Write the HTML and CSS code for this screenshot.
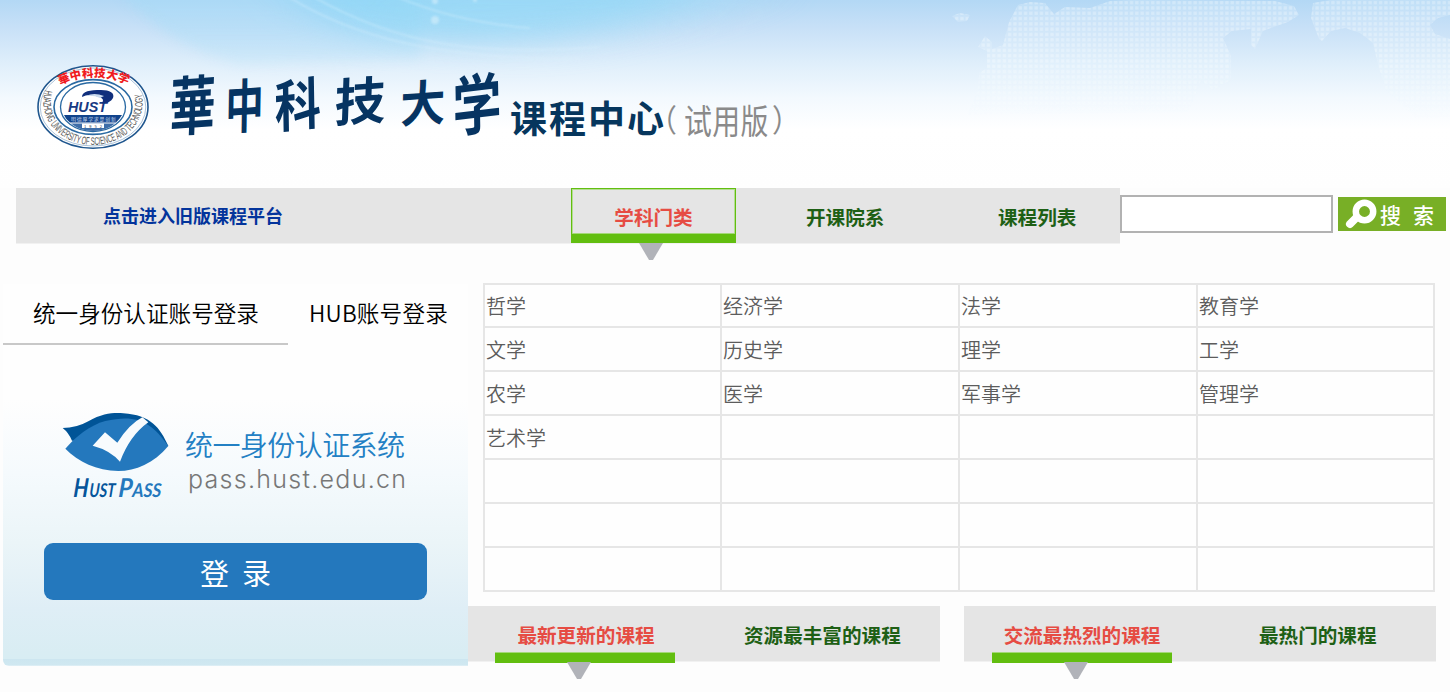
FILE: index.html
```html
<!DOCTYPE html>
<html lang="zh-CN">
<head>
<meta charset="utf-8">
<title>华中科技大学课程中心</title>
<link rel="stylesheet" href="styles.css">
</head>
<body>
<header class="banner">
  <svg class="banner-art" viewBox="0 0 1450 188" width="1450" height="188" aria-label="華中科技大学 课程中心">
    <defs>
      <linearGradient id="fade" x1="0" y1="0" x2="0" y2="1"><stop offset="0" stop-color="#fff"/><stop offset=".2" stop-color="#eee"/><stop offset=".5" stop-color="#777"/><stop offset="1" stop-color="#000"/></linearGradient>
      <linearGradient id="mapFade" x1="0" y1="0" x2="0" y2="1"><stop offset="0" stop-color="#fff"/><stop offset=".5" stop-color="#fff"/><stop offset="1" stop-color="#000"/></linearGradient>
      <mask id="fadeMask" maskUnits="userSpaceOnUse" x="0" y="0" width="1450" height="130"><rect width="1450" height="130" fill="url(#fade)"/></mask>
      <mask id="mapMask" maskUnits="userSpaceOnUse" x="0" y="0" width="1450" height="130"><rect width="1450" height="130" fill="url(#mapFade)"/></mask>
      <filter id="soft" x="-20%" y="-50%" width="140%" height="200%"><feGaussianBlur stdDeviation="6"/></filter>
      <filter id="wide" x="-20%" y="-80%" width="140%" height="260%"><feGaussianBlur stdDeviation="26 14"/></filter>
      <filter id="soft1"><feGaussianBlur stdDeviation="1"/></filter>
      <filter id="soft2"><feGaussianBlur stdDeviation=".7"/></filter>
      <pattern id="dots" width="5.3" height="5.3" patternUnits="userSpaceOnUse"><rect width="5.3" height="5.3" fill="#e8f5ff" opacity=".24"/><rect x="1" y="1" width="3.3" height="3.3" fill="#fff" opacity=".26"/></pattern>
      <path id="ring" d="M45 90 C36 125 67 145 93 145 C120 145 150 125 141 90"/>
      <path id="arc" d="M60 85 Q93 69 129 85"/>
    </defs>
    <g mask="url(#fadeMask)">
      <path d="M116 -20 L126 0 C165 38 200 55 240 66 L420 60 L420 -20Z" fill="#a2dcf7" opacity=".42" filter="url(#soft)"/>
      <path d="M270 -30 C310 20 350 40 430 44 C520 44 600 30 680 0 L700 -30Z" fill="#85d5f6" opacity=".62" filter="url(#wide)"/>
      <path d="M380 20 C480 75 600 55 760 0 L780 -20 L450 -20Z" fill="#a0dcf7" opacity=".38" filter="url(#wide)"/>
      <g fill="none" stroke="#e5f7ff" stroke-width="1.500" opacity=".38" filter="url(#soft1)"><path d="M285 -5 Q350 35 430 48 T580 58"/><path d="M310 -5 Q375 32 440 43 T600 47"/><path d="M395 -4 Q455 22 530 28"/></g>
      <g fill="#fff" opacity=".35" filter="url(#soft1)"><circle cx="435" cy="20" r="4"/><circle cx="435" cy="1" r="3"/><circle cx="475" cy="0" r="2"/></g>
    </g>
    <g mask="url(#mapMask)" filter="url(#soft2)">
      <path fill="url(#dots)" d="M1003 45 1009 22 1018 5 1030 2 1045 3 1054 14 1065 7 1090 8 1110 1 1130 0 1275 1 1294 6 1299 15 1288 22 1271 28 1263 31 1255 49 1251 45 1251 29 1232 31 1223 38 1231 56 1231 80 1213 90 1201 80 1193 101 1188 112 967 115 978 91 979 73 987 68 987 51 978 47 985 36 992 42 992 49Z M1311 18 1313 3 1330 0 1450 0 1450 15 1438 18 1430 25 1435 34 1450 39 1450 117 1416 118 1400 103 1386 90 1378 65 1373 43 1360 33 1345 28 1331 31 1322 41 1319 39 1316 31Z M952 16 960 13 970 15 967 21 958 22Z"/>
    </g>
    <g class="seal">
      <ellipse cx="93" cy="107" rx="55" ry="41.3" fill="#fff" stroke="#1f568e" stroke-width="1.6"/>
      <ellipse cx="93" cy="107" rx="52.8" ry="39" fill="none" stroke="#87a9c8" stroke-width=".7"/>
      <ellipse cx="93" cy="107" rx="39" ry="27.400" fill="#fff" stroke="#2969a2" stroke-width="1.6"/>
      <ellipse cx="93" cy="107" rx="32.500" ry="24.500" fill="#fff" stroke="#2969a2" stroke-width="1.3"/>
      <text class="seal-cn"><textPath href="#arc" textLength="70" lengthAdjust="spacing">華中科技大学</textPath></text>
      <text class="seal-en"><textPath href="#ring" textLength="166" lengthAdjust="spacingAndGlyphs">HUAZHONG UNIVERSITY OF SCIENCE AND TECHNOLOGY</textPath></text>
      <path d="M64 115H122Q119 120 116 122.500H70Q66 120 64 115Z" fill="#10438b"/>
      <path d="M71 123.500H115Q106 131 93 131 80 131 71 123.500Z" fill="#3e6da8"/>
      <text class="seal-motto" x="71" y="121" textLength="45">明德厚学求是创新</text>
      <rect x="82" y="123.500" width="22" height="4.500" fill="#fff"/><text class="seal-year" x="84" y="127.500" textLength="18">1952</text>
      <text class="seal-word" x="68" y="112" textLength="39" lengthAdjust="spacingAndGlyphs">HUST</text>
      <path d="M82 97C82 91 90 90 101 90 110 90 115 93 113 98 111 102 106 104 102 103 105 99 101 97 96 96 90 94 86 95 82 97Z" fill="#102f7d"/>
      <path d="M86 96Q94 92 104 96L100 98Q94 95 86 96Z" fill="#c8d9ee"/>
    </g>
    <g class="brush">
      <text transform="translate(169 131) rotate(-4) skewX(-6) scale(.79 1.1)" font-size="58">華</text>
      <text transform="translate(225 129) rotate(-4) skewX(-5) scale(.71 1.07)" font-size="54">中</text>
      <text transform="translate(275 128) rotate(-6) skewX(-5) scale(.83 1)" font-size="56">科</text>
      <text transform="translate(334 122) rotate(-4) skewX(-6) scale(1 1)" font-size="51">技</text>
      <text transform="translate(400 123) rotate(-4) skewX(-5) scale(.92 1)" font-size="49">大</text>
      <text transform="translate(453 132) rotate(-7) skewX(-6) scale(.82 1.09)" font-size="60">学</text>
    </g>
    <text class="site-name" x="510" y="133" textLength="154">课程中心</text>
    <text class="trial" transform="translate(649 132) scale(.82 .92)" x="0" y="0">（</text>
    <text class="trial" transform="translate(684 134) scale(.82 1)" x="0" y="0" textLength="103">试用版</text>
    <text class="trial" transform="translate(772 132) scale(.82 .92)" x="0" y="0">）</text>
  </svg>
</header>

<nav class="nav">
  <div class="bar">
    <a class="old">点击进入旧版课程平台</a>
    <a class="tab active boxed">学科门类<svg class="arrow" width="24" height="17"><path d="M0 0H24L14 17H10Z"/></svg></a>
    <a class="tab departments">开课院系</a>
    <a class="tab courses">课程列表</a>
  </div>
  <input class="query" type="text" aria-label="搜索">
  <button class="search"><svg width="32" height="30" viewBox="0 0 32 30"><circle cx="19.500" cy="12.500" r="8.700" fill="none" stroke="#fff" stroke-width="6.500"/><path d="M11 19 5 25" stroke="#fff" stroke-width="8" stroke-linecap="round"/></svg><span>搜</span><span>索</span></button>
</nav>

<main class="main">
  <section class="login">
    <div class="login-tabs"><a class="current">统一身份认证账号登录</a><a class="hub">HUB账号登录</a></div>
    <svg class="pass" width="400" height="110" viewBox="40 400 400 110">
      <g transform="translate(40 400) scale(.3333)">
        <path fill="#005497" d="M68 84Q110 84 145 64C190 38 225 38 250 40 332 45 361 84 385 138L96 122Q86 98 68 84Z"/>
        <path fill="#2478bd" d="M76 146C105 112 150 75 196 63 287 42 332 62 385 138 342 190 286 213 235 213 170 212 115 185 76 146Z"/>
        <path fill="#f8fbfd" d="M158 137 195 97 232 128Q268 72 307 52L325 67Q270 106 240 185 211 151 158 137Z"/>
      </g>
      <text class="hust" transform="translate(73 497) skewX(-4)"><tspan font-size="26" textLength="15" lengthAdjust="spacingAndGlyphs">H</tspan><tspan font-size="19" x="16" textLength="26" lengthAdjust="spacingAndGlyphs">UST</tspan></text>
      <text class="hust light" transform="translate(118 497) skewX(-4)"><tspan font-size="26" textLength="14" lengthAdjust="spacingAndGlyphs">P</tspan><tspan font-size="19" x="14" textLength="29" lengthAdjust="spacingAndGlyphs">ASS</tspan></text>
      <text class="pass-cn" x="185" y="456" textLength="220">统一身份认证系统</text>
      <text class="pass-url" x="188" y="488" textLength="218">pass.hust.edu.cn</text>
    </svg>
    <button class="submit">登&nbsp; 录</button>
  </section>

  <section class="content">
    <div class="subjects">
      <div>哲学</div><div>经济学</div><div>法学</div><div>教育学</div>
      <div>文学</div><div>历史学</div><div>理学</div><div>工学</div>
      <div>农学</div><div>医学</div><div>军事学</div><div>管理学</div>
      <div>艺术学</div><div></div><div></div><div></div>
      <div></div><div></div><div></div><div></div>
      <div></div><div></div><div></div><div></div>
      <div></div><div></div><div></div><div></div>
    </div>
    <div class="rankings">
      <div class="rank latest"><a class="tab active">最新更新的课程<svg class="arrow" width="24" height="18"><path d="M0 0H24L14 17H10Z"/></svg></a><a class="tab second">资源最丰富的课程</a></div>
      <div class="rank popular"><a class="tab active">交流最热烈的课程<svg class="arrow" width="24" height="18"><path d="M0 0H24L14 17H10Z"/></svg></a><a class="tab second">最热门的课程</a></div>
    </div>
  </section>
</main>
</body>
</html>
```

FILE: styles.css
```css
* { box-sizing: border-box; }
body { margin: 0; width: 1450px; height: 692px; overflow: hidden; background: #fdfdfd; font-family: "Noto Sans CJK SC", sans-serif; }
a { white-space: nowrap; }
button { border: 0; padding: 0; font-family: inherit; color: #fff; }
.banner { height: 188px; background: linear-gradient(#b3d8f5 0, #c7e0f7 27px, #e0effb 65px, #f3f9fe 98px, #fff 130px, #fefefe 188px); }
.banner-art { display: block; }
.seal-cn { font-size: 11.5px; font-weight: 900; fill: #f01b20; }
.seal-en { font: 11px "Liberation Sans", sans-serif; fill: #555; }
.seal-motto { font-size: 5px; fill: #c8d8ef; }
.seal-year { font-size: 4px; fill: #345; }
.seal-word { font: italic bold 15px "Liberation Sans", sans-serif; fill: #173a83; }
.brush { font-weight: 700; fill: #063462; }
.site-name { font-size: 37px; font-weight: 700; fill: #06365d; }
.trial { font-size: 34px; fill: #8a8a8a; }

.nav { display: flex; height: 96px; padding-left: 16px; align-items: flex-start; }
.bar { display: flex; width: 1104px; height: 56px; background: #e5e5e5; border-bottom: 1px solid #f1f1f1; }
.old { width: 555px; padding-left: 87px; font-size: 18px; line-height: 55px; font-weight: 700; color: #03349c; }
.tab { font-size: 19.6px; font-weight: 700; line-height: 57px; color: #1e6015; }
.active { position: relative; color: #e64c43; text-align: center; }
.active::after { content: ""; position: absolute; left: 0; right: 0; bottom: -1px; height: 10px; background: #62be10; border-top: 1px solid #a5d879; }
.boxed { width: 165px; height: 55px; border: 1px solid #62be10; line-height: 55px; box-shadow: inset 0 0 0 1px #b4dc93; }
.boxed::after { bottom: 0; height: 8px; }
.arrow { position: absolute; z-index: 1; left: 67px; top: 56px; fill: #b1b3b9; }
.boxed .arrow { top: 54px; }
.departments { padding-left: 70px; width: 262px; }
.courses { width: 120px; }
.query { width: 213px; height: 38px; margin-top: 7px; border: 2px solid #b2b2b2; background: #fff; outline: 0; }
.search { width: 108px; height: 34px; margin: 9px 0 0 5px; padding: 0 11px 0 7px; display: flex; align-items: center; background: #78af26; font-size: 21px; font-weight: 500; line-height: 30px; }
.search span { margin-top: -1px; }
.search span:nth-of-type(1) { margin-left: 3px; }
.search span:nth-of-type(2) { margin-left: 12px; }

.main { display: flex; padding-left: 3px; height: 408px; }
.login { width: 465px; height: 382px; background: linear-gradient(#fefefe 0, #fefefe 115px, #f5fafd 190px, #ebf5f8 258px, #dfeef6 325px, #d9edf3 368px, #d8edf3 375px, #cde6f0 375px, #d0e8f1 381px, #e8f3f8 382px); border-radius: 0 0 0 6px; }
.login-tabs { display: flex; height: 61px; font-size: 22.6px; line-height: 58px; color: #000; font-weight: 350; }
.current { width: 285px; padding-left: 30px; border-bottom: 2px solid #c8c8c8; }
.hub { padding-left: 21px; letter-spacing: .2px; }
.pass { display: block; margin: 55px 0 0 37px; }
.hust { font-family: Lato, sans-serif; font-style: italic; font-weight: 700; fill: #05559b; }
.light { fill: #2478bd; }
.pass-cn { font-size: 28px; font-weight: 350; fill: #2380c4; }
.pass-url { font: 300 25px Inter, sans-serif; fill: #777; }
.submit { display: block; width: 383px; height: 57px; margin: 33px 0 0 41px; padding-top: 1px; border-radius: 9px; background: #2478bd; font-size: 29px; line-height: 54px; }
.content { width: 968px; margin-top: -1px; }
.subjects { display: grid; grid-template-columns: 235px 236px 236px 235px; grid-template-rows: 41px repeat(6, 42px); gap: 2px; width: 952px; height: 309px; margin-left: 15px; padding: 2px; background: #e6e6e6; }
.subjects div { background: #fefefe; padding-left: 1px; color: #5c5c5c; font-size: 20px; line-height: 42px; font-weight: 350; }
.subjects div:nth-child(n+5) { line-height: 44px; height: 42px; }
.rankings { display: flex; gap: 24px; margin-top: 14px; }
.rank { display: flex; width: 472px; height: 56px; background: #e5e5e5; border-bottom: 1px solid #f1f1f1; }
.rank .tab { line-height: 58px; }
.rank .active { width: 180px; height: 56px; }
.latest .active { margin-left: 27px; padding-left: 2px; }
.popular .active { margin-left: 28px; }
.rank .arrow { left: 72px; }
.latest .second { margin-left: 69px; }
.popular .second { margin-left: 87px; }
```
